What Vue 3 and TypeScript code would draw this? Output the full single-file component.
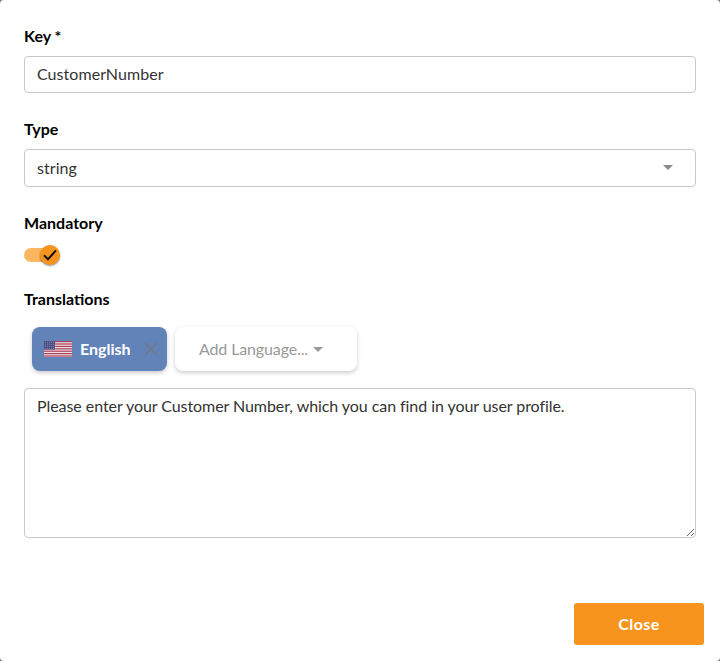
<script setup lang="ts">
const stripes: number[] = [0, 2.4, 4.8, 7.2, 9.6, 12, 14.4];
const stars: Array<[number, number]> = [];
for (let r = 0; r < 4; r++) {
  for (let c = 0; c < 6; c++) {
    stars.push([1.5 + c * 2, 1.2 + r * 2]);
  }
}
</script>

<template>
  <div class="modal">
    <div class="body">
      <section class="field">
        <label class="label">Key *</label>
        <input class="control" value="CustomerNumber" />
      </section>
      <section class="field">
        <label class="label">Type</label>
        <div class="control select">
          <span>string</span>
          <i class="caret"></i>
        </div>
      </section>
      <section class="field mandatory">
        <label class="label">Mandatory</label>
        <div class="toggle">
          <div class="track"></div>
          <div class="thumb">
            <svg viewBox="0 0 14 12" width="14" height="12">
              <path d="M1 6.2 L5 10.2 L13 1.4" fill="none" stroke="#111" stroke-width="2" />
            </svg>
          </div>
        </div>
      </section>
      <section class="translations">
        <label class="label">Translations</label>
        <div class="tabs">
          <div class="tab active">
            <svg class="flag" viewBox="0 0 28 16" width="28" height="16">
              <rect width="28" height="16" fill="#f0dfe2" />
              <rect v-for="y in stripes" :key="y" x="0" :y="y" width="28" height="1.2" fill="#a8405a" />
              <rect x="0" y="0" width="11" height="8.6" fill="#4d5285" />
              <circle v-for="(s, i) in stars" :key="i" :cx="s[0]" :cy="s[1]" r="0.4" fill="#c8cbe0" />
            </svg>
            <span class="tab-name">English</span>
            <svg class="close" viewBox="0 0 14 14" width="14" height="14">
              <path d="M1 1 L13 13 M13 1 L1 13" stroke="#737980" stroke-width="1.5" fill="none" />
            </svg>
          </div>
          <div class="tab add">
            <span>Add Language...</span>
            <i class="caret small"></i>
          </div>
        </div>
        <textarea class="area">Please enter your Customer Number, which you can find in your user profile.</textarea>
      </section>
    </div>
    <footer class="footer">
      <button class="btn" type="button">Close</button>
    </footer>
  </div>
</template>

<style>
html, body { margin: 0; background: #777; }
</style>

<style scoped>
.modal {
  width: 720px;
  height: 661px;
  box-sizing: border-box;
  background: #fff;
  border-radius: 4px;
  display: flex;
  flex-direction: column;
  font-family: Lato, sans-serif;
  color: #333;
  font-size: 16px;
}
.body {
  flex: 1;
  padding: 27px 24px 0;
  display: flex;
  flex-direction: column;
}
.label {
  display: block;
  font-weight: 700;
  font-size: 16px;
  line-height: 18px;
  color: #000;
}
.field { margin-bottom: 27px; }
.control {
  display: flex;
  align-items: center;
  box-sizing: border-box;
  width: 100%;
  height: 37px;
  margin-top: 11px;
  padding: 0 12px 2px;
  border: 1px solid #c8c8c8;
  border-radius: 4px;
  font: 400 16px Lato, sans-serif;
  letter-spacing: 0.05px;
  color: #333;
  background: #fff;
  outline: none;
}
.select {
  height: 38px;
  justify-content: space-between;
  padding: 0 22px 2px 12px;
}
.caret {
  display: block;
  width: 0;
  height: 0;
  border-left: 5px solid transparent;
  border-right: 5px solid transparent;
  border-top: 5px solid #8a8a8a;
}
.mandatory { margin-bottom: 25px; }
.toggle {
  position: relative;
  width: 37px;
  height: 20px;
  margin-top: 13px;
  display: flex;
  align-items: center;
}
.track {
  width: 34px;
  height: 14px;
  border-radius: 7px;
  background: #fbb660;
}
.thumb {
  position: absolute;
  left: 16px;
  top: 0;
  width: 20px;
  height: 20px;
  border-radius: 50%;
  background: #f7941e;
  box-shadow: 0 1px 2px rgba(0, 0, 0, 0.45);
  display: flex;
  align-items: center;
  justify-content: center;
}
.tabs {
  display: flex;
  gap: 8px;
  padding-left: 8px;
  margin-top: 19px;
  margin-bottom: 17px;
}
.tab {
  height: 44px;
  box-sizing: border-box;
  border-radius: 8px;
  display: flex;
  align-items: center;
  padding-bottom: 2px;
  box-shadow: 0 2px 4px rgba(0, 0, 0, 0.2);
}
.active {
  width: 135px;
  background: #6183b8;
  color: #fff;
  font-weight: 700;
  padding-left: 12px;
}
.flag { flex: none; margin-top: 2px; }
.tab-name { margin-left: 8px; }
.close { margin-left: 13px; margin-top: 2px; flex: none; }
.add {
  width: 182px;
  background: #fff;
  color: #999;
  padding-left: 24px;
  gap: 5px;
  letter-spacing: -0.13px;
}
.caret.small { border-top-color: #999; margin-top: 2px; }
.area {
  display: block;
  box-sizing: border-box;
  width: 100%;
  height: 150px;
  padding: 8px 12px;
  border: 1px solid #c8c8c8;
  border-radius: 4px;
  font: 400 16px/18px Lato, sans-serif;
  letter-spacing: -0.065px;
  color: #333;
  outline: none;
  resize: vertical;
}
.footer {
  display: flex;
  justify-content: flex-end;
  padding: 0 16px 16px;
}
.btn {
  width: 130px;
  height: 42px;
  border: 0;
  border-radius: 3px;
  background: #f7941e;
  color: #fff;
  font: 700 16px Lato, sans-serif;
  letter-spacing: 0.4px;
  padding: 0 0 2px;
}
</style>
